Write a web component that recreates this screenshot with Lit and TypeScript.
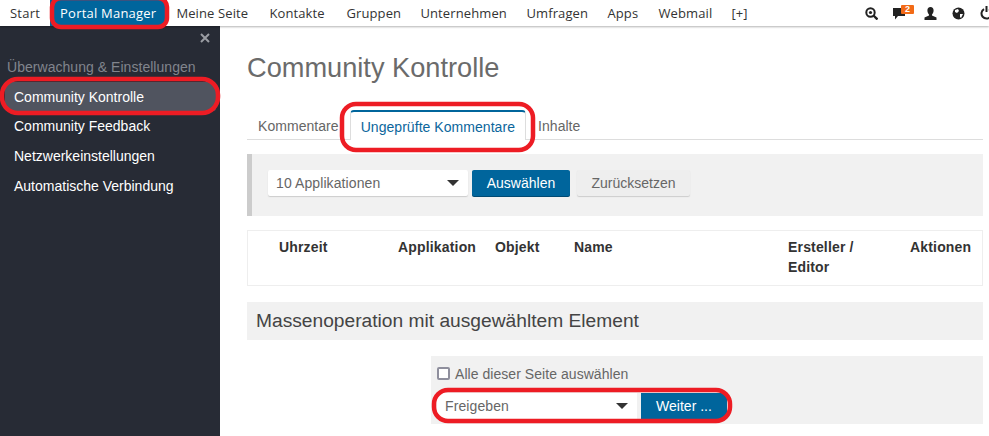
import { LitElement, html, css } from "lit";
import { customElement } from "lit/decorators.js";

const NAV: [string, number][] = [
  ["Meine Seite", 73],
  ["Kontakte", 57],
  ["Gruppen", 54],
  ["Unternehmen", 86],
  ["Umfragen", 61],
  ["Apps", 31],
  ["Webmail", 53],
  ["[+]", 19],
];

@customElement("app-root")
export class AppRoot extends LitElement {
  static styles = css`
    :host { display: block; position: relative; width: 989px; height: 436px; overflow: hidden; background: #fff; font-family: "Liberation Sans", Arial, sans-serif; color: #555; font-size: 14px; }
    * { box-sizing: border-box; }
    .top { position: relative; z-index: 2; height: 26px; display: flex; align-items: center; background: #fff; box-shadow: 0 1px 2px rgba(0,0,0,.3); font-family: "Open Sans", sans-serif; font-size: 13px; letter-spacing: .22px; color: #333; padding-left: 10px; }
    .top .item { margin-right: 20px; white-space: nowrap; flex: none; }
    .top .fit { letter-spacing: .12px; }
    .top .active { background: #00659c; color: #fff; height: 26px; line-height: 26px; padding: 0 10px; margin: 0 10px 0 0; }
    .first { margin-right: 10px !important; }
    .icons { position: absolute; left: 865px; top: 0; display: flex; align-items: center; height: 26px; }
    .icons svg { display: block; flex: none; }
    .badge-wrap { position: relative; flex: none; width: 21px; height: 16px; margin-left: 15px; }
    .badge { position: absolute; left: 8px; top: 0; width: 13px; height: 9px; background: #f26a16; color: #fff; font-size: 9px; line-height: 9px; letter-spacing: 0; text-align: center; border-radius: 1px; font-weight: 700; font-family: "Liberation Sans", sans-serif; }
    .ic-chat { margin-top: 3px; }
    .ic-person { margin-left: 10px; }
    .ic-next { margin-left: 15px; }
    .body { display: flex; height: 410px; }
    .side { width: 220px; flex: none; background: #272b35; color: #fff; padding-top: 3px; display: flex; flex-direction: column; }
    .close { align-self: flex-end; margin-right: 10px; height: 18px; display: flex; align-items: center; }
    .side h4 { margin: 10px 0 0; font-weight: 400; font-size: 14px; letter-spacing: .04px; line-height: 20px; color: #81858d; padding-left: 7px; }
    .side .link { height: 30px; line-height: 30px; padding-left: 14px; font-size: 14px; color: #fff; }
    .side .link.sel { background: #50545f; margin: 5px 4px 0 5px; padding-left: 9px; height: 29px; border-radius: 3px; }
    .main { flex: 1; padding: 0 6px 0 27px; min-width: 0; }
    h1 { margin: 25px 0 0; font-weight: 400; font-size: 27.2px; line-height: 34px; color: #6b6b6b; }
    .tabs { display: flex; align-items: flex-end; margin-top: 25px; height: 30px; border-bottom: 1px solid #ddd; font-size: 14px; letter-spacing: .05px; color: #666; }
    .tab { padding: 0 0 0 11px; height: 29px; line-height: 33px; }
    .tab.last { padding-left: 12px; }
    .tab.on { margin-left: 11px; padding: 0 10px; color: #0b669c; background: #fff; height: 30px; line-height: 31px; border: 1px solid #ddd; border-top: 2px solid #00659c; border-bottom: 0; border-radius: 4px 4px 0 0; margin-bottom: -1px; }
    .filter { margin-top: 14px; height: 62px; background: #f1f1f1; border-left: 5px solid #ccc; display: flex; align-items: center; padding: 0 0 4px 16px; }
    .select { background: #fff; display: flex; align-items: center; justify-content: space-between; font-size: 14px; letter-spacing: .1px; color: #666; border-radius: 2px; }
    .select.a { width: 200px; height: 26px; padding: 0 9px 0 8px; box-shadow: 0 1px 1px #ccc; }
    .arrow { width: 0; height: 0; border-left: 6px solid transparent; border-right: 6px solid transparent; border-top: 6px solid #333; }
    .btn { display: flex; align-items: center; justify-content: center; font-size: 14px; }
    .btn.pri { background: #00659c; color: #fff; width: 98px; height: 26px; margin-left: 4px; border-radius: 2px; box-shadow: 0 1px 0 #004a73; }
    .btn.sec { background: #eee; color: #666; width: 113px; height: 26px; margin-left: 7px; border-radius: 2px; box-shadow: 0 1px 1px #ccc; }
    .thead { margin-top: 14px; height: 56px; border: 1px solid #eee; display: grid; grid-template-columns: 31px 119px 97px 79px 214px 122px 1fr; font-size: 14px; letter-spacing: .17px; font-weight: 700; color: #333; line-height: 20px; padding-top: 6px; }
    .bulk-h { margin-top: 16px; height: 38px; background: #f1f1f1; padding-left: 9px; font-size: 19.2px; line-height: 38px; color: #444; }
    .bulk { margin: 16px 0 0 184px; height: 68px; background: #f1f1f1; padding: 7px 6px 0; }
    .check { display: flex; align-items: center; height: 21px; font-size: 14px; letter-spacing: .05px; color: #666; }
    .box { width: 13px; height: 13px; border: 2px solid #8f8f9d; border-radius: 2px; background: #fff; margin-right: 5px; }
    .row { display: flex; margin-top: 9px; height: 26px; }
    .select.b { width: 200px; padding: 0 9px 0 8px; height: 26px; border-radius: 0; }
    .btn.go { background: #00659c; color: #fff; width: 86px; height: 26px; margin-left: 4px; }
    .marks { position: absolute; inset: 0; width: 989px; height: 436px; z-index: 5; pointer-events: none; }
    .marks rect { fill: none; stroke: #ed1c24; stroke-width: 4.5; }
  `;

  render() {
    return html`
      <div class="top">
        <span class="item first">Start</span>
        <span class="item active">Portal Manager</span>
        ${NAV.map(([n, w]) => html`<span class="item fit" style="width:${w}px">${n}</span>`)}
        <div class="icons">
          <svg width="13" height="13" viewBox="0 0 13 13"><circle cx="5.500" cy="5.500" r="4.200" fill="none" stroke="#222" stroke-width="2"/><circle cx="5.500" cy="5.500" r="1.600" fill="#222"/><path d="M8.500 8.500l4 4" stroke="#222" stroke-width="2.400"/></svg>
          <div class="badge-wrap">
            <svg class="ic-chat" width="13" height="12" viewBox="0 0 13 12"><path d="M0 0h12v8H5l-3 3.500V8H0z" fill="#222"/></svg>
            <span class="badge">2</span>
          </div>
          <svg class="ic-person" width="13" height="13" viewBox="0 0 13 13"><path d="M6.500 0C8.500 0 9.600 1.500 9.600 3.500S8.500 7 8 7.600v1l4.500 2V13H.5v-2.400L5 8.600v-1C4.500 7 3.400 5.500 3.400 3.500S4.500 0 6.500 0z" fill="#222"/></svg>
          <svg class="ic-next" width="13" height="13" viewBox="0 0 13 13"><circle cx="6.500" cy="6.500" r="6" fill="#222"/><path d="M3 3l3-1 1 2-2 2-2-1zM8 7l3 0-2 4-1-1z" fill="#fff"/></svg>
          <svg class="ic-next" width="13" height="14" viewBox="0 0 13 14"><path d="M4 3.200a5 5 0 1 0 5 0" fill="none" stroke="#222" stroke-width="2"/><path d="M6.500 0v6" stroke="#222" stroke-width="2"/></svg>
        </div>
      </div>
      <div class="body">
        <aside class="side">
          <div class="close"><svg width="10" height="10" viewBox="0 0 10 10"><path d="M1 1l8 8M9 1l-8 8" stroke="#9a9da3" stroke-width="2"/></svg></div>
          <h4>Überwachung &amp; Einstellungen</h4>
          <div class="link sel">Community Kontrolle</div>
          <div class="link">Community Feedback</div>
          <div class="link">Netzwerkeinstellungen</div>
          <div class="link">Automatische Verbindung</div>
        </aside>
        <main class="main">
          <h1>Community Kontrolle</h1>
          <div class="tabs">
            <span class="tab">Kommentare</span>
            <span class="tab on">Ungeprüfte Kommentare</span>
            <span class="tab last">Inhalte</span>
          </div>
          <div class="filter">
            <div class="select a">10 Applikationen<span class="arrow"></span></div>
            <div class="btn pri">Auswählen</div>
            <div class="btn sec">Zurücksetzen</div>
          </div>
          <div class="thead">
            <span></span><span>Uhrzeit</span><span>Applikation</span><span>Objekt</span><span>Name</span><span>Ersteller /<br />Editor</span><span>Aktionen</span>
          </div>
          <div class="bulk-h">Massenoperation mit ausgewähltem Element</div>
          <div class="bulk">
            <label class="check"><span class="box"></span>Alle dieser Seite auswählen</label>
            <div class="row">
              <div class="select b">Freigeben<span class="arrow"></span></div>
              <div class="btn go">Weiter ...</div>
            </div>
          </div>
        </main>
      </div>
      <svg class="marks" viewBox="0 0 989 436">
        <rect x="52" y="-2" width="115" height="29" rx="9"/>
        <rect x="2" y="79" width="216" height="34" rx="16"/>
        <rect x="342" y="104" width="191" height="46" rx="14"/>
        <rect x="434" y="390" width="296" height="31" rx="14"/>
      </svg>
    `;
  }
}
